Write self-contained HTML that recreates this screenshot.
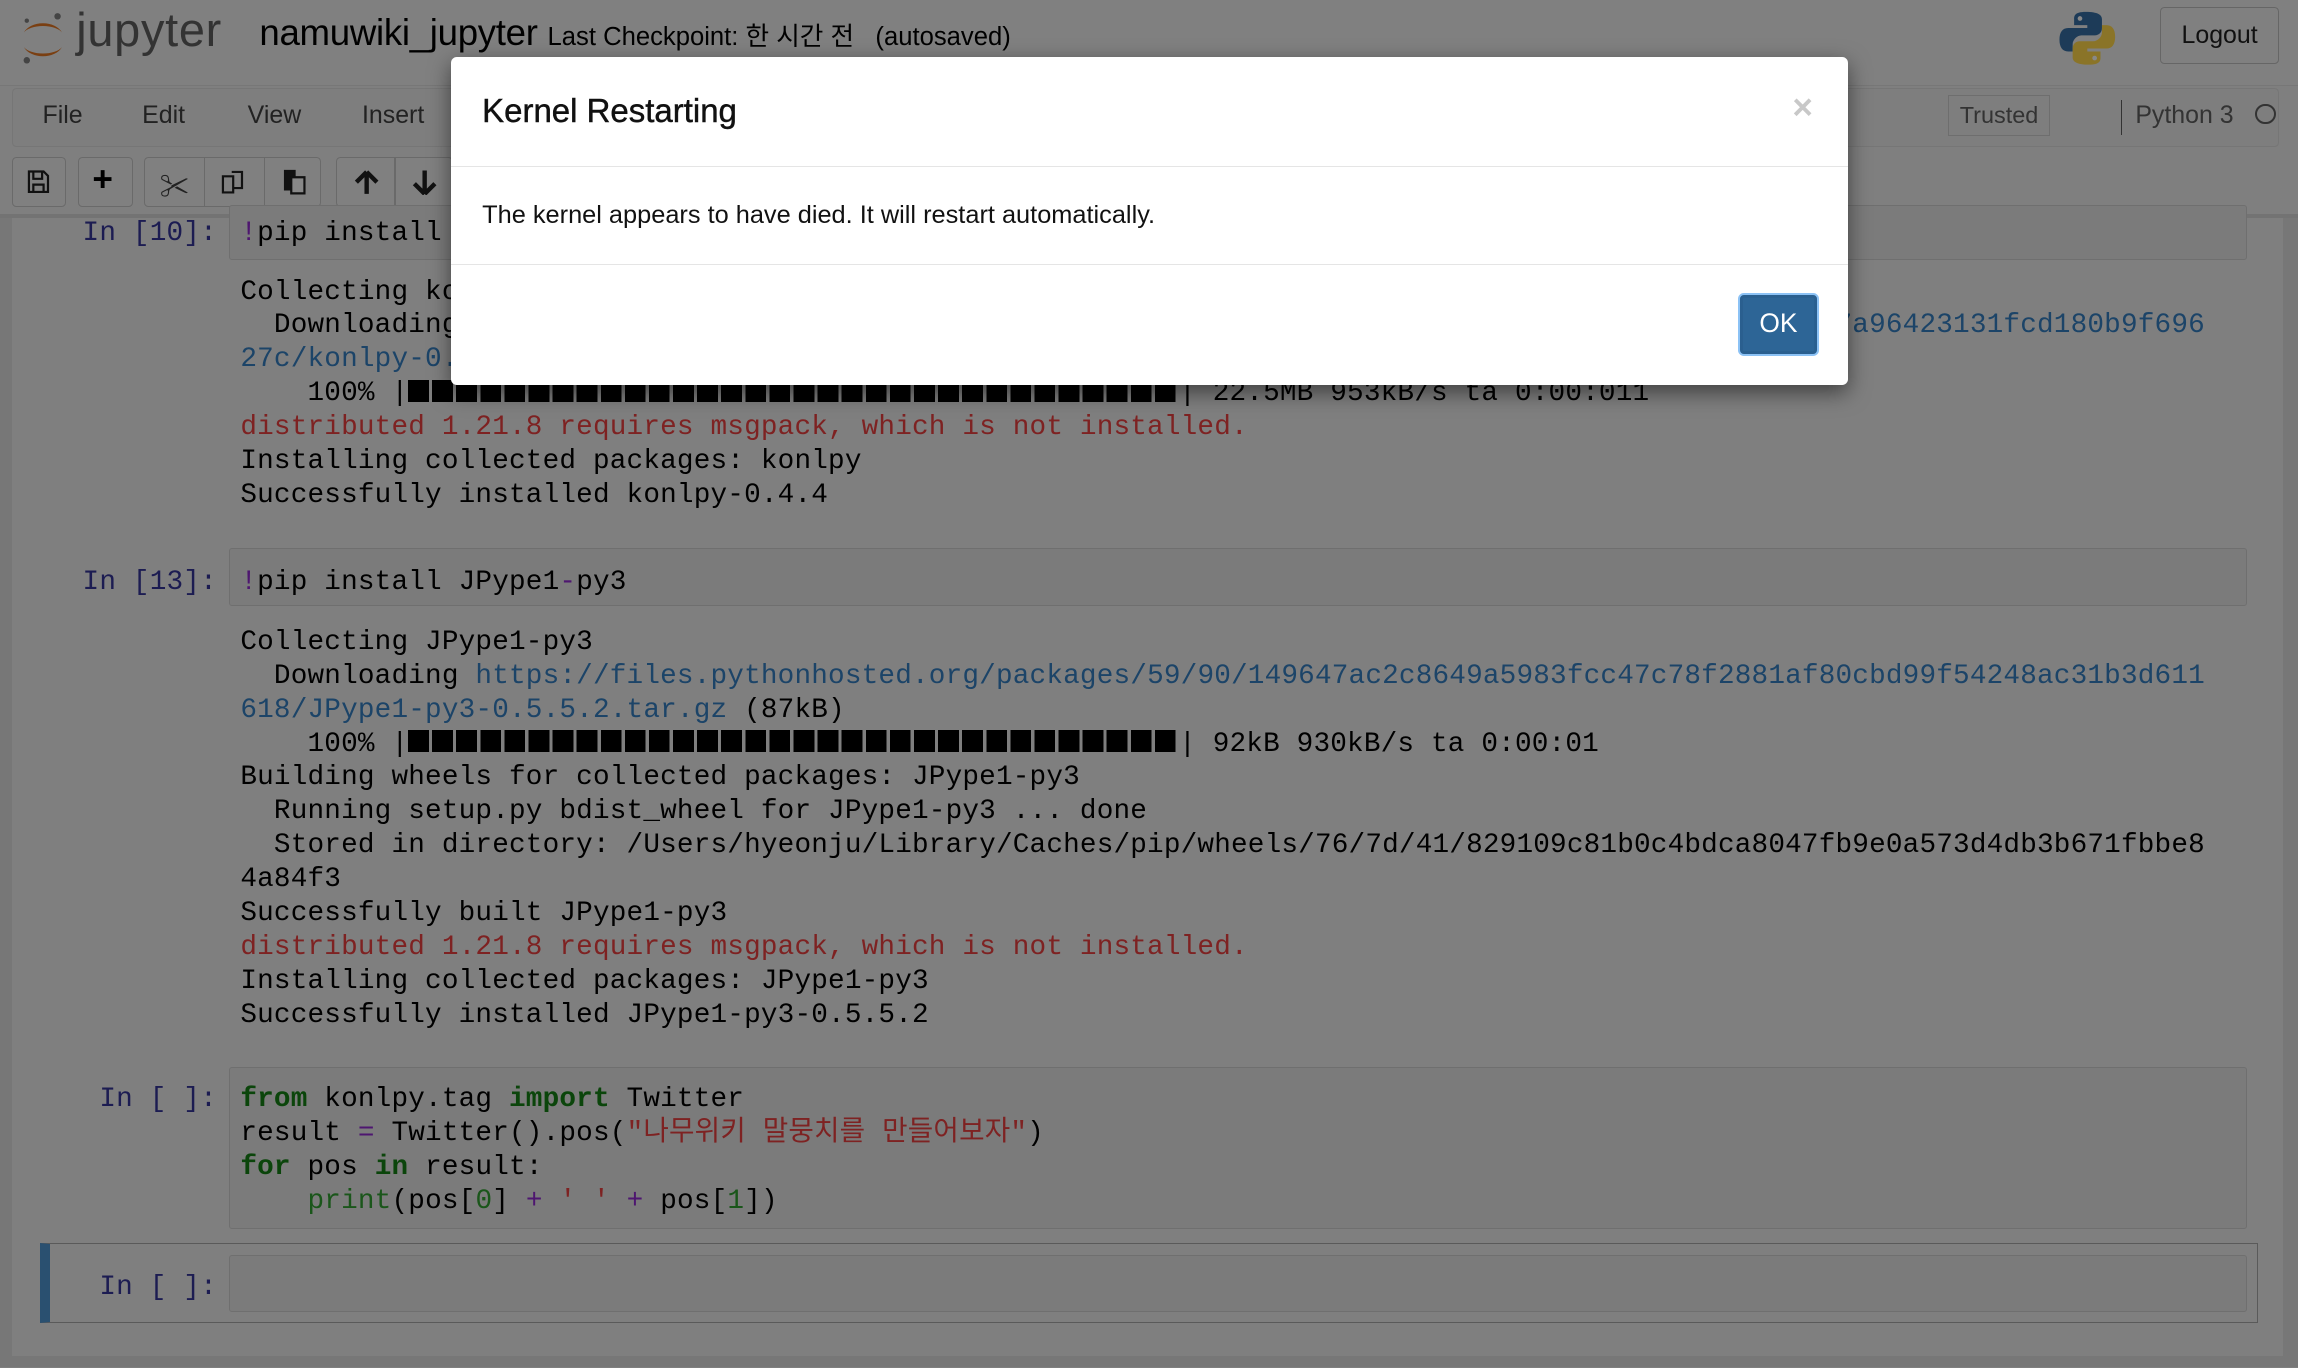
<!DOCTYPE html>
<html><head><meta charset="utf-8">
<style>
html,body{margin:0;padding:0;width:2298px;height:1368px;overflow:hidden;background:#7f7f7f}
#w{zoom:1.46556;width:1568px;height:933px;position:relative;overflow:hidden;font-family:"Liberation Sans","Noto Sans CJK KR",sans-serif;color:#000}
.a{position:absolute;white-space:pre}
.m{font-family:"Liberation Mono","Noto Sans CJK KR",monospace;font-size:18.9px;line-height:23.15px;letter-spacing:0.12px}
.p{color:#1c1c52;text-align:right;width:140px;left:8px}
.box{position:absolute;border:1px solid #6f6f6f;border-radius:2px;background:#7b7b7b}
.tb{position:absolute;top:107px;height:34px;border:1px solid #6a6a6a;border-radius:3px;background:#808080;box-sizing:border-box}
.r{color:#7e2222}.b{color:#1c4468}.k{color:#0b450b;font-weight:bold}.o{color:#4e1670}.g{color:#1a561a}
.bar{display:inline-block;width:526px;height:15px;vertical-align:-1px;background:repeating-linear-gradient(90deg,#000 0 14.2px,transparent 14.2px 16.44px)}
</style></head><body><div id="w">
<!-- header -->
<div class="a" style="left:0;top:0;width:1568px;height:58px;background:#808080;border-bottom:1px solid #777"></div>
<svg class="a" style="left:12px;top:6px" width="34" height="40" viewBox="0 0 34 40">
<path d="M4 16 A14 10 0 0 1 30 16 A14 7 0 0 0 4 16Z" fill="#7a3f12"/>
<path d="M4 26 A14 10 0 0 0 30 26 A14 7 0 0 1 4 26Z" fill="#7a3f12"/>
<circle cx="27" cy="5" r="2.2" fill="#444"/><circle cx="6" cy="35" r="2.2" fill="#444"/><circle cx="6" cy="8" r="1.5" fill="#444"/>
</svg>
<div class="a" style="left:52px;top:2px;font-size:32px;color:#333;letter-spacing:0.5px">jupyter</div>
<div class="a" style="left:177px;top:8px;font-size:25px;letter-spacing:-0.2px">namuwiki_jupyter <span style="font-size:17.5px;letter-spacing:0">Last Checkpoint: 한 시간 전&nbsp;&nbsp; (autosaved)</span></div>
<svg class="a" style="left:1404px;top:6px" width="40" height="40" viewBox="0 0 40 40">
<path d="M19 2c-8 0-8 3-8 5v4h9v2H7c-4 0-6 3-6 8s2 8 6 8h3v-5c0-3 3-6 6-6h9c3 0 5-2 5-5V7c0-3-3-5-11-5z" fill="#1d3b58"/>
<path d="M21 38c8 0 8-3 8-5v-4h-9v-2h13c4 0 6-3 6-8s-2-8-6-8h-3v5c0 3-3 6-6 6h-9c-3 0-5 2-5 5v6c0 3 3 5 11 5z" fill="#8a7428"/>
<circle cx="15" cy="6.5" r="1.6" fill="#888"/><circle cx="25" cy="33.5" r="1.6" fill="#888"/></svg>
<div class="a" style="left:1474px;top:5px;width:81px;height:39px;border:1px solid #666;border-radius:3px;box-sizing:border-box;font-size:17px;text-align:center;line-height:37px;color:#111">Logout</div>
<!-- menubar -->
<div class="a" style="left:8px;top:60px;width:1547px;height:40px;border:1px solid #767676;border-radius:3px;box-sizing:border-box;background:#7e7e7e"></div>
<div class="a" style="left:29px;top:69px;font-size:17px;color:#222">File</div>
<div class="a" style="left:97px;top:69px;font-size:17px;color:#222">Edit</div>
<div class="a" style="left:169px;top:69px;font-size:17px;color:#222">View</div>
<div class="a" style="left:247px;top:69px;font-size:17px;color:#222">Insert</div>
<div class="a" style="left:1329px;top:65px;width:70px;height:28px;border:1px solid #6e6e6e;box-sizing:border-box;font-size:16px;text-align:center;line-height:26px;color:#333">Trusted</div>
<div class="a" style="left:1447px;top:68px;width:1px;height:24px;background:#333"></div>
<div class="a" style="left:1457px;top:69px;font-size:17px;color:#333">Python 3</div>
<div class="a" style="left:1539px;top:71px;width:11px;height:11px;border:2px solid #333;border-radius:50%"></div>
<!-- toolbar -->
<div class="tb" style="left:8px;width:37px"></div>
<svg class="a" style="left:18px;top:116px" width="16" height="16"><path d="M2 1h10l3 3v11H2z M5 1v5h6V1 M5 10h7v5H5z" fill="none" stroke="#111" stroke-width="1.5"/></svg>
<div class="tb" style="left:53px;width:38px"></div>
<div class="a" style="left:63px;top:109px;font-size:24px;font-weight:bold">+</div>
<div class="tb" style="left:98px;width:121px"></div>
<div class="a" style="left:139px;top:107px;width:1px;height:34px;background:#6a6a6a"></div>
<div class="a" style="left:180px;top:107px;width:1px;height:34px;background:#6a6a6a"></div>
<div class="a" style="left:109px;top:112px;font-size:20px;color:#222">✂</div>
<svg class="a" style="left:150px;top:115px" width="20" height="18"><path d="M2 5h7v11H2z M8 2h7v11h-6" fill="none" stroke="#111" stroke-width="1.5"/></svg>
<svg class="a" style="left:192px;top:114px" width="18" height="20"><path d="M2 2h8v14H2z" fill="#111"/><path d="M7 7h9v11H7z" fill="#888" stroke="#111" stroke-width="1.5"/></svg>
<div class="tb" style="left:229px;width:80px"></div>
<div class="a" style="left:269px;top:107px;width:1px;height:34px;background:#6a6a6a"></div>
<svg class="a" style="left:240px;top:115px" width="20" height="18"><path d="M10 2L3 9M10 2l7 7M10 2v15" stroke="#111" stroke-width="3" fill="none"/></svg>
<svg class="a" style="left:280px;top:115px" width="20" height="18"><path d="M10 17L3 10M10 17l7-7M10 17V1" stroke="#111" stroke-width="3" fill="none"/></svg>
<!-- notebook area -->
<div class="a" style="left:0;top:148px;width:8px;height:785px;background:#777"></div>
<div class="a" style="left:1558px;top:148px;width:10px;height:785px;background:#777"></div>
<div class="a" style="left:0;top:925px;width:1568px;height:8px;background:#777"></div>
<div class="a" style="left:0;top:146px;width:1568px;height:3px;background:#737373"></div>
<!-- cell 1 -->
<div class="box" style="left:156px;top:140px;width:1376px;height:36px"></div>
<div class="a m p" style="top:148px">In [10]:</div>
<div class="a m" style="left:164px;top:148px"><span class="o">!</span>pip install konlpy</div>
<div class="a m" style="left:164px;top:188px">Collecting konlpy
  Downloading <span class="b">https://files.pythonhosted.org/packages/e5/3d/4e983cd98d87b50b2ab0387d73fa946f7457a96423131fcd180b9f696</span>
<span class="b">27c/konlpy-0.4.4-py2.py3-none-any.whl</span> (22.5MB)
    100% |<span class="bar"></span>| 22.5MB 953kB/s ta 0:00:011
<span class="r">distributed 1.21.8 requires msgpack, which is not installed.</span>
Installing collected packages: konlpy
Successfully installed konlpy-0.4.4</div>
<!-- cell 2 -->
<div class="box" style="left:156px;top:374px;width:1376px;height:38px"></div>
<div class="a m p" style="top:386px">In [13]:</div>
<div class="a m" style="left:164px;top:386px"><span class="o">!</span>pip install JPype1<span class="o">-</span>py3</div>
<div class="a m" style="left:164px;top:427px">Collecting JPype1-py3
  Downloading <span class="b">https://files.pythonhosted.org/packages/59/90/149647ac2c8649a5983fcc47c78f2881af80cbd99f54248ac31b3d611</span>
<span class="b">618/JPype1-py3-0.5.5.2.tar.gz</span> (87kB)
    100% |<span class="bar"></span>| 92kB 930kB/s ta 0:00:01
Building wheels for collected packages: JPype1-py3
  Running setup.py bdist_wheel for JPype1-py3 ... done
  Stored in directory: /Users/hyeonju/Library/Caches/pip/wheels/76/7d/41/829109c81b0c4bdca8047fb9e0a573d4db3b671fbbe8
4a84f3
Successfully built JPype1-py3
<span class="r">distributed 1.21.8 requires msgpack, which is not installed.</span>
Installing collected packages: JPype1-py3
Successfully installed JPype1-py3-0.5.5.2</div>
<!-- cell 3 -->
<div class="box" style="left:156px;top:728px;width:1376px;height:109px"></div>
<div class="a m p" style="top:739px">In [ ]:</div>
<div class="a m" style="left:164px;top:739px"><span class="k">from</span> konlpy.tag <span class="k">import</span> Twitter
result <span class="o">=</span> Twitter().pos(<span class="r">"나무위키 말뭉치를 만들어보자"</span>)
<span class="k">for</span> pos <span class="k">in</span> result:
    <span class="g">print</span>(pos[<span class="g">0</span>] <span class="o">+</span> <span class="r">' '</span> <span class="o">+</span> pos[<span class="g">1</span>])</div>
<!-- cell 4 selected -->
<div class="a" style="left:27px;top:848px;width:1514px;height:55px;border:1px solid #5a5a5a;border-left:7px solid #2a5070;box-sizing:border-box"></div>
<div class="box" style="left:156px;top:856px;width:1376px;height:38px"></div>
<div class="a m p" style="top:867px">In [ ]:</div>
<!-- modal -->
<div class="a" style="left:308px;top:39px;width:953px;height:224px;background:#fff;border-radius:4px;box-shadow:0 5px 15px rgba(0,0,0,.5)"></div>
<div class="a" style="left:329px;top:63px;font-size:22.5px;color:#111;-webkit-text-stroke:0.3px #111">Kernel Restarting</div>
<div class="a" style="left:1223px;top:60px;font-size:24px;color:#c8c8c8;font-weight:bold">×</div>
<div class="a" style="left:308px;top:113px;width:953px;height:1px;background:#e5e5e5"></div>
<div class="a" style="left:329px;top:137px;font-size:17.3px;color:#111">The kernel appears to have died. It will restart automatically.</div>
<div class="a" style="left:308px;top:180px;width:953px;height:1px;background:#e5e5e5"></div>
<div class="a" style="left:1186px;top:200px;width:55px;height:43px;background:#2d6596;border:2px solid #8cc2f5;border-radius:4px;box-sizing:border-box;box-shadow:inset 0 0 0 2px #2a5f8f;color:#fff;font-size:18px;text-align:center;line-height:39px">OK</div>
</div></body></html>
